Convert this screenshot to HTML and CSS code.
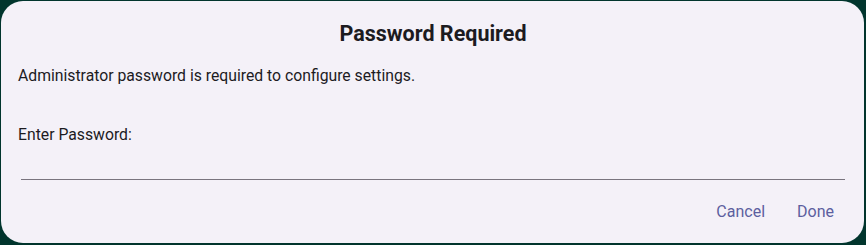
FILE: index.html
```html
<!DOCTYPE html>
<html>
<head>
<meta charset="utf-8">
<link rel="stylesheet" href="styles.css">
</head>
<body>
<div class="dialog">
  <h1 class="title">Password Required</h1>
  <p class="message">Administrator password is required to configure settings.</p>
  <label class="label">Enter Password:</label>
  <div class="field"></div>
  <div class="actions">
    <button class="btn">Cancel</button>
    <button class="btn">Done</button>
  </div>
</div>
</body>
</html>
```
FILE: styles.css
```css
html, body {
  margin: 0;
  padding: 0;
  background: #01352d;
  width: 866px;
  height: 245px;
  overflow: hidden;
}
body {
  padding: 1px 2px 2px 1px;
  box-sizing: border-box;
  font-family: Roboto, "Noto Sans", sans-serif;
}
.dialog {
  background: #f4f1f8;
  border-radius: 22px;
  height: 242px;
  box-sizing: border-box;
  padding: 19px 19px 0 17px;
  display: flex;
  flex-direction: column;
  color: #1c1b1f;
}
.title {
  margin: 0;
  font-size: 21.5px;
  font-weight: 700;
  line-height: 28px;
  text-align: center;
  padding-left: 3px;
}
.message {
  margin: 17px 0 0 0;
  font-size: 15.75px;
  line-height: 22px;
}
.label {
  margin-top: 37px;
  font-size: 15.75px;
  line-height: 22px;
}
.field {
  margin: 33px 0 0 3px;
  height: 1px;
  background: #79747e;
}
.actions {
  display: flex;
  justify-content: flex-end;
  gap: 10px;
  margin-top: 16px;
}
.btn {
  background: none;
  border: none;
  font-family: Roboto, "Noto Sans", sans-serif;
  font-size: 16px;
  color: #5c5f9f;
  padding: 6px 11px;
  line-height: 20px;
  cursor: pointer;
}
```
